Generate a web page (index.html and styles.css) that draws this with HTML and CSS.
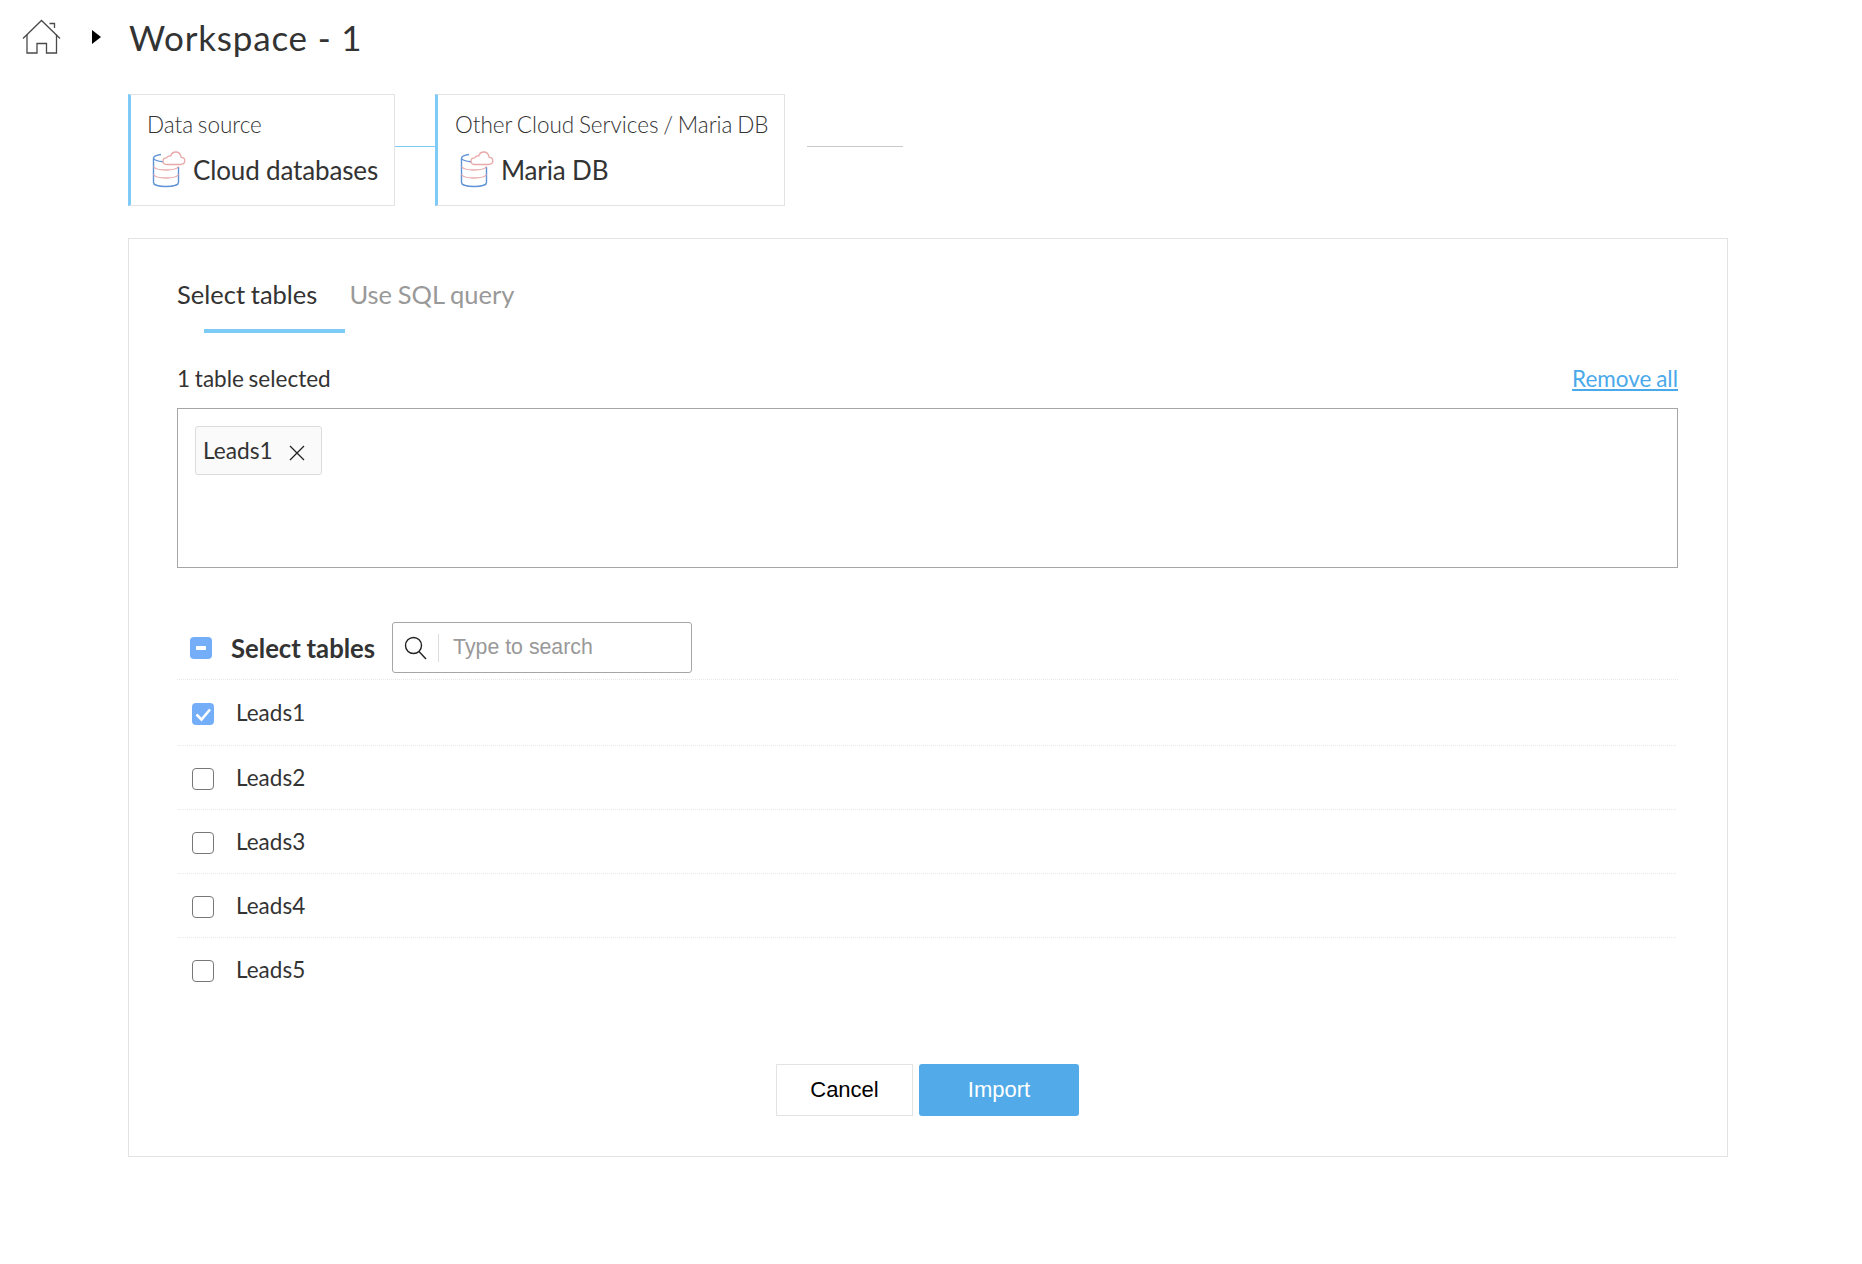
FILE: index.html
```html
<!DOCTYPE html>
<html lang="en">
<head>
<meta charset="utf-8">
<title>Workspace - 1</title>
<link rel="stylesheet" href="styles.css">
</head>
<body>
<svg class="defs" width="0" height="0" aria-hidden="true">
  <symbol id="db" viewBox="0 0 34 38">
    <path d="M9 4.500C4.500 5.200 1.500 6.300 1.500 8.200V32.500C1.500 35 7 36.500 14 36.500S26.500 35 26.500 32.500V17" fill="none" stroke="#5f93d6" stroke-width="1.400"/>
    <path d="M1.500 8.500C2.500 10.300 6 11.300 11 11.700" fill="none" stroke="#5f93d6" stroke-width="1.400"/>
    <path d="M1.500 16.500C3 19 8 20 14 20S25 19 26.500 16.500M1.500 24.500C3 27 8 28 14 28S25 27 26.500 24.500" fill="none" stroke="#e8a9a9" stroke-width="1.300"/>
    <path d="M15 14.500H28.500C31 14.500 32.800 13 32.800 10.800C32.800 8.700 31.200 7.300 29.200 7.300C28.600 4 26.500 2 23.800 2C21.200 2 19.400 3.600 18.700 6C16.600 5.800 15.500 6.500 14.500 7.800C12.300 7.800 11 9.200 11 11C11 13 12.500 14.500 15 14.500Z" fill="#fff" stroke="#e8a9a9" stroke-width="1.300"/>
  </symbol>
</svg>

<header class="top">
  <svg class="home" width="40" height="36" viewBox="0 0 40 36" fill="none" stroke="#4a4a4a" stroke-width="1.300">
    <path d="M1 19.500L19.500 1.500L38 19.500"/>
    <path d="M5 15.500V34H15V24.500H24.500V34H34.500V15.500"/>
    <path d="M27.500 4.500H32.500V9"/>
  </svg>
  <span class="caret"></span>
  <h1 class="title">Workspace - 1</h1>
</header>

<main class="content">
  <section class="steps">
    <div class="step step-first">
      <div class="step-label">Data source</div>
      <div class="step-value">
        <svg class="db" width="34" height="38"><use href="#db"/></svg>
        <span>Cloud databases</span>
      </div>
    </div>
    <div class="link link-blue"></div>
    <div class="step step-second">
      <div class="step-label">Other Cloud Services / Maria DB</div>
      <div class="step-value">
        <svg class="db" width="34" height="38"><use href="#db"/></svg>
        <span>Maria DB</span>
      </div>
    </div>
    <div class="link link-grey"></div>
  </section>

  <section class="panel">
    <nav class="tabs">
      <span class="tab tab-active">Select tables</span>
      <span class="tab">Use SQL query</span>
    </nav>

    <div class="selected-head">
      <span>1 table selected</span>
      <a class="remove" href="#">Remove all</a>
    </div>
    <div class="selected-box">
      <span class="chip">Leads1
        <svg class="chip-x" width="16" height="16" viewBox="0 0 16 16" stroke="#222" stroke-width="1.300"><path d="M1 1L15 15M15 1L1 15"/></svg>
      </span>
    </div>

    <div class="list-head">
      <span class="box box-on box-head"><span class="minus"></span></span>
      <span class="list-title">Select tables</span>
      <div class="search">
        <svg class="search-icon" width="23" height="24" viewBox="0 0 23 24" fill="none" stroke="#222" stroke-width="1.400"><circle cx="9.500" cy="9.500" r="8"/><path d="M15 15.500L22 23"/></svg>
        <span class="search-sep"></span>
        <span class="search-text">Type to search</span>
      </div>
    </div>

    <ul class="rows">
      <li class="row row-first">
        <span class="box box-on"><svg width="22" height="22" viewBox="0 0 22 22" fill="none" stroke="#fff" stroke-width="2.600"><path d="M4.500 11.500L9.500 16.500L18 6.500"/></svg></span>
        <span>Leads1</span>
      </li>
      <li class="row"><span class="box"></span><span>Leads2</span></li>
      <li class="row"><span class="box"></span><span>Leads3</span></li>
      <li class="row"><span class="box"></span><span>Leads4</span></li>
      <li class="row"><span class="box"></span><span>Leads5</span></li>
    </ul>

    <div class="actions">
      <button class="btn btn-cancel" type="button">Cancel</button>
      <button class="btn btn-import" type="button">Import</button>
    </div>
  </section>
</main>
</body>
</html>
```

FILE: styles.css
```css
* { box-sizing: border-box; }
html, body { margin: 0; padding: 0; background: #fff; }
body {
  width: 1862px;
  height: 1264px;
  overflow: hidden;
  font-family: Lato, "Liberation Sans", sans-serif;
  color: #333;
}
.defs { position: absolute; }

.top {
  display: flex;
  align-items: center;
  height: 76px;
  padding-left: 22px;
  padding-bottom: 2px;
}
.home { flex: none; }
.caret {
  width: 0;
  height: 0;
  margin-left: 30px;
  margin-top: -1px;
  border-left: 9px solid #000;
  border-top: 7px solid transparent;
  border-bottom: 7px solid transparent;
}
.title {
  margin: 0 0 0 28px;
  font-size: 35px;
  font-weight: 400;
  letter-spacing: 0.8px;
  color: #333;
}

.content {
  padding: 18px 134px 0 128px;
}

.steps {
  display: flex;
  align-items: flex-start;
}
.step {
  height: 112px;
  border: 1px solid #e3e3e3;
  border-left: 3px solid #7fcbf7;
  padding: 15px 0 0 16px;
}
.step-first { width: 267px; }
.step-second { width: 350px; padding-left: 17px; }
.step-label {
  font-size: 22.500px;
  font-weight: 300;
  word-spacing: -1.400px;
  line-height: 29px;
  color: #333;
  white-space: nowrap;
}
.step-value {
  display: flex;
  align-items: center;
  gap: 7px;
  margin-top: 12px;
  margin-left: 5px;
  font-size: 26px;
  letter-spacing: -0.15px;
  line-height: 38px;
  color: #333;
  white-space: nowrap;
}
.db { flex: none; margin-top: -3px; }
.link { height: 1px; margin-top: 52px; }
.link-blue { width: 40px; background: #7fcbf7; }
.link-grey { width: 96px; margin-left: 22px; background: #c9c9c9; }

.panel {
  margin-top: 32px;
  height: 919px;
  border: 1px solid #e3e3e3;
  padding: 0 49px 0 48px;
}
.tabs {
  display: flex;
  gap: 32px;
  height: 91px;
  padding-top: 39px;
}
.tab {
  position: relative;
  font-size: 25.500px;
  word-spacing: -0.800px;
  line-height: 32px;
  color: #999;
  white-space: nowrap;
}
.tab-active { color: #333; }
.tab-active::after {
  content: "";
  position: absolute;
  left: 27px;
  top: 51px;
  width: 141px;
  height: 4px;
  background: #7fcbf7;
}

.selected-head {
  display: flex;
  justify-content: space-between;
  align-items: center;
  height: 32px;
  margin-top: 32px;
  font-size: 22.500px;
  word-spacing: -1px;
  color: #333;
}
.remove { color: #4aa9ea; text-decoration: underline; }
.selected-box {
  height: 160px;
  margin-top: 14px;
  border: 1px solid #a6a6a6;
  padding: 17px 0 0 17px;
}
.chip {
  display: inline-flex;
  align-items: center;
  width: 127px;
  height: 49px;
  padding-left: 7px;
  background: #fafafa;
  border: 1px solid #dcdcdc;
  border-radius: 3px;
  font-size: 22.700px;
  color: #333;
}
.chip-x { margin-left: 16px; margin-top: 4px; }

.list-head {
  display: flex;
  align-items: center;
  height: 58px;
  margin-top: 54px;
  padding-left: 13px;
  padding-bottom: 6px;
  border-bottom: 1px dotted #e8e8e8;
}
.box {
  display: flex;
  flex: none;
  width: 22px;
  height: 22px;
  border: 1px solid #777;
  border-radius: 4px;
  background: #fff;
}
.box-on {
  align-items: center;
  justify-content: center;
  border: 0;
  background: #74aef8;
}
.box-on svg { display: block; }
.minus { width: 10px; height: 4px; background: #fff; border-radius: 1px; }
.list-title {
  margin-left: 19px;
  font-size: 25.700px;
  font-weight: 700;
  word-spacing: -0.500px;
  color: #333;
  white-space: nowrap;
}
.search {
  display: flex;
  align-items: center;
  width: 300px;
  height: 51px;
  margin-left: 17px;
  border: 1px solid #a6a6a6;
  border-radius: 3px;
  padding-left: 11px;
}
.search-icon { flex: none; }
.search-sep { width: 1px; height: 28px; margin-left: 11px; background: #dcdcdc; }
.search-text {
  margin-left: 14px;
  font-family: "Liberation Sans", Arial, sans-serif;
  font-size: 21.300px;
  color: #999;
}

.rows {
  list-style: none;
  margin: 0;
  padding: 0;
}
.row {
  display: flex;
  align-items: center;
  gap: 22px;
  height: 64px;
  margin: 0 2px 0 1px;
  padding-left: 14px;
  border-bottom: 1px dotted #e8e8e8;
  font-size: 22.500px;
  color: #333;
}
.row-first { height: 66px; }
.row:last-child { border-bottom-color: transparent; }
.row .box { margin-top: 2px; }

.actions {
  display: flex;
  justify-content: center;
  gap: 6px;
  margin-top: 62px;
}
.btn {
  height: 52px;
  padding: 0;
  font-family: "Liberation Sans", Arial, sans-serif;
  font-size: 22px;
  cursor: pointer;
}
.btn-cancel {
  width: 137px;
  background: #fff;
  border: 1px solid #e3e3e3;
  color: #000;
}
.btn-import {
  width: 160px;
  background: #52abe8;
  border: 0;
  border-radius: 3px;
  color: #fff;
}
```
